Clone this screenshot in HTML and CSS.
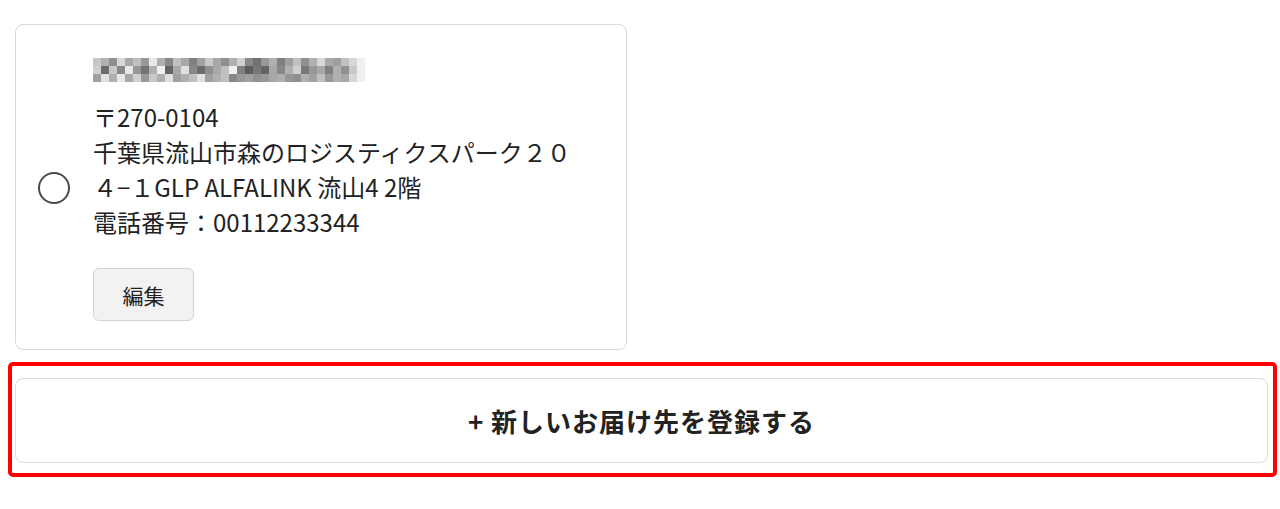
FILE: index.html
```html
<!DOCTYPE html>
<html lang="ja">
<head>
<meta charset="utf-8">
<title>お届け先</title>
<link rel="stylesheet" href="styles.css">
</head>
<body>
<main class="page">
  <section class="address-card">
    <label class="radio" aria-label="このお届け先を選択"><span class="radio-ring"></span></label>
    <div class="address-body">
      <svg class="mosaic" width="272" height="24" viewBox="0 0 272 24" aria-hidden="true">
        <g>
          <rect x="0" y="0" width="8" height="8" fill="#c8c8c8"/><rect x="8" y="0" width="8" height="8" fill="#b0b0b0"/><rect x="16" y="0" width="8" height="8" fill="#909090"/><rect x="24" y="0" width="8" height="8" fill="#d8d8d8"/><rect x="32" y="0" width="8" height="8" fill="#a8a8a8"/><rect x="40" y="0" width="8" height="8" fill="#c0c0c0"/><rect x="48" y="0" width="8" height="8" fill="#989898"/><rect x="56" y="0" width="8" height="8" fill="#e8e8e8"/><rect x="64" y="0" width="8" height="8" fill="#b0b0b0"/><rect x="72" y="0" width="8" height="8" fill="#888888"/><rect x="80" y="0" width="8" height="8" fill="#c0c0c0"/><rect x="88" y="0" width="8" height="8" fill="#a8a8a8"/><rect x="96" y="0" width="8" height="8" fill="#808080"/><rect x="104" y="0" width="8" height="8" fill="#a0a0a0"/><rect x="112" y="0" width="8" height="8" fill="#c8c8c8"/><rect x="120" y="0" width="8" height="8" fill="#a8a8a8"/><rect x="128" y="0" width="8" height="8" fill="#909090"/><rect x="136" y="0" width="8" height="8" fill="#b0b0b0"/><rect x="144" y="0" width="8" height="8" fill="#d0d0d0"/><rect x="152" y="0" width="8" height="8" fill="#888888"/><rect x="160" y="0" width="8" height="8" fill="#707070"/><rect x="168" y="0" width="8" height="8" fill="#989898"/><rect x="176" y="0" width="8" height="8" fill="#b0b0b0"/><rect x="184" y="0" width="8" height="8" fill="#808080"/><rect x="192" y="0" width="8" height="8" fill="#a0a0a0"/><rect x="200" y="0" width="8" height="8" fill="#c0c0c0"/><rect x="208" y="0" width="8" height="8" fill="#909090"/><rect x="216" y="0" width="8" height="8" fill="#b0b0b0"/><rect x="224" y="0" width="8" height="8" fill="#d8d8d8"/><rect x="232" y="0" width="8" height="8" fill="#a8a8a8"/><rect x="240" y="0" width="8" height="8" fill="#a0a0a0"/><rect x="248" y="0" width="8" height="8" fill="#c0c0c0"/><rect x="256" y="0" width="8" height="8" fill="#d8d8d8"/><rect x="264" y="0" width="8" height="8" fill="#f0f0f0"/>
        </g>
        <g>
          <rect x="0" y="8" width="8" height="8" fill="#d0d0d0"/><rect x="8" y="8" width="8" height="8" fill="#6c6c6c"/><rect x="16" y="8" width="8" height="8" fill="#c8c8c8"/><rect x="24" y="8" width="8" height="8" fill="#888888"/><rect x="32" y="8" width="8" height="8" fill="#e8e8e8"/><rect x="40" y="8" width="8" height="8" fill="#989898"/><rect x="48" y="8" width="8" height="8" fill="#747474"/><rect x="56" y="8" width="8" height="8" fill="#b0b0b0"/><rect x="64" y="8" width="8" height="8" fill="#f0f0f0"/><rect x="72" y="8" width="8" height="8" fill="#646464"/><rect x="80" y="8" width="8" height="8" fill="#a8a8a8"/><rect x="88" y="8" width="8" height="8" fill="#e0e0e0"/><rect x="96" y="8" width="8" height="8" fill="#888888"/><rect x="104" y="8" width="8" height="8" fill="#6c6c6c"/><rect x="112" y="8" width="8" height="8" fill="#909090"/><rect x="120" y="8" width="8" height="8" fill="#a8a8a8"/><rect x="128" y="8" width="8" height="8" fill="#c0c0c0"/><rect x="136" y="8" width="8" height="8" fill="#f0f0f0"/><rect x="144" y="8" width="8" height="8" fill="#808080"/><rect x="152" y="8" width="8" height="8" fill="#5c5c5c"/><rect x="160" y="8" width="8" height="8" fill="#787878"/><rect x="168" y="8" width="8" height="8" fill="#646464"/><rect x="176" y="8" width="8" height="8" fill="#a8a8a8"/><rect x="184" y="8" width="8" height="8" fill="#888888"/><rect x="192" y="8" width="8" height="8" fill="#b0b0b0"/><rect x="200" y="8" width="8" height="8" fill="#d0d0d0"/><rect x="208" y="8" width="8" height="8" fill="#787878"/><rect x="216" y="8" width="8" height="8" fill="#989898"/><rect x="224" y="8" width="8" height="8" fill="#a8a8a8"/><rect x="232" y="8" width="8" height="8" fill="#808080"/><rect x="240" y="8" width="8" height="8" fill="#b0b0b0"/><rect x="248" y="8" width="8" height="8" fill="#909090"/><rect x="256" y="8" width="8" height="8" fill="#c8c8c8"/><rect x="264" y="8" width="8" height="8" fill="#f0f0f0"/>
        </g>
        <g>
          <rect x="0" y="16" width="8" height="8" fill="#a0a0a0"/><rect x="8" y="16" width="8" height="8" fill="#e0e0e0"/><rect x="16" y="16" width="8" height="8" fill="#b0b0b0"/><rect x="24" y="16" width="8" height="8" fill="#e8e8e8"/><rect x="32" y="16" width="8" height="8" fill="#a8a8a8"/><rect x="40" y="16" width="8" height="8" fill="#d0d0d0"/><rect x="48" y="16" width="8" height="8" fill="#989898"/><rect x="56" y="16" width="8" height="8" fill="#c8c8c8"/><rect x="64" y="16" width="8" height="8" fill="#b0b0b0"/><rect x="72" y="16" width="8" height="8" fill="#e0e0e0"/><rect x="80" y="16" width="8" height="8" fill="#a0a0a0"/><rect x="88" y="16" width="8" height="8" fill="#b0b0b0"/><rect x="96" y="16" width="8" height="8" fill="#c0c0c0"/><rect x="104" y="16" width="8" height="8" fill="#e0e0e0"/><rect x="112" y="16" width="8" height="8" fill="#a0a0a0"/><rect x="120" y="16" width="8" height="8" fill="#b0b0b0"/><rect x="128" y="16" width="8" height="8" fill="#c0c0c0"/><rect x="136" y="16" width="8" height="8" fill="#888888"/><rect x="144" y="16" width="8" height="8" fill="#989898"/><rect x="152" y="16" width="8" height="8" fill="#a0a0a0"/><rect x="160" y="16" width="8" height="8" fill="#909090"/><rect x="168" y="16" width="8" height="8" fill="#989898"/><rect x="176" y="16" width="8" height="8" fill="#a8a8a8"/><rect x="184" y="16" width="8" height="8" fill="#b0b0b0"/><rect x="192" y="16" width="8" height="8" fill="#989898"/><rect x="200" y="16" width="8" height="8" fill="#909090"/><rect x="208" y="16" width="8" height="8" fill="#b0b0b0"/><rect x="216" y="16" width="8" height="8" fill="#a0a0a0"/><rect x="224" y="16" width="8" height="8" fill="#c0c0c0"/><rect x="232" y="16" width="8" height="8" fill="#989898"/><rect x="240" y="16" width="8" height="8" fill="#b0b0b0"/><rect x="248" y="16" width="8" height="8" fill="#a8a8a8"/><rect x="256" y="16" width="8" height="8" fill="#d8d8d8"/><rect x="264" y="16" width="8" height="8" fill="#f0f0f0"/>
        </g>
      </svg>
      <p class="address-lines">〒270-0104<br>千葉県流山市森のロジスティクスパーク２０４−１GLP ALFALINK 流山4 2階<br>電話番号：00112233344</p>
      <button class="edit-button" type="button">編集</button>
    </div>
  </section>
  <div class="highlight">
    <button class="add-button" type="button">+ 新しいお届け先を登録する</button>
  </div>
</main>
</body>
</html>
```
FILE: styles.css
```css
* {
  box-sizing: border-box;
}

html, body {
  margin: 0;
  padding: 0;
  background: #ffffff;
}

body {
  font-family: "Noto Sans CJK JP", "Noto Sans", sans-serif;
  color: #222222;
}

.page {
  padding: 24px 0 0 0;
  display: flex;
  flex-direction: column;
}

.address-card {
  margin-left: 15px;
  width: 612px;
  height: 326px;
  border: 1px solid #d9d9d9;
  border-radius: 8px;
  display: flex;
  align-items: flex-start;
  padding: 33px 32px 28px 22px;
  gap: 23px;
}

.radio {
  flex: 0 0 auto;
  display: flex;
  align-self: center;
  margin-top: -4px;
}

.radio-ring {
  width: 32px;
  height: 32px;
  border: 2px solid #4a4a4a;
  border-radius: 50%;
}

.address-body {
  display: flex;
  flex-direction: column;
  align-items: flex-start;
  flex: 1 1 auto;
  min-width: 0;
}

.mosaic {
  display: block;
  margin-bottom: 17px;
}

.address-lines {
  margin: 0;
  font-size: 24px;
  line-height: 35px;
  color: #222222;
}

.edit-button {
  margin-top: 29px;
  width: 101px;
  height: 53px;
  background: #f2f2f2;
  border: 1px solid #d4d4d4;
  border-radius: 6px;
  font-family: inherit;
  font-size: 21px;
  color: #222222;
  padding: 0;
}

.highlight {
  margin: 12px 3px 0 8px;
  border: 4px solid #ff0000;
  border-radius: 5px;
  padding: 12px 5px 10px 3px;
}

.add-button {
  display: block;
  width: 100%;
  height: 85px;
  background: #ffffff;
  border: 1px solid #dcdcdc;
  border-radius: 8px;
  font-family: inherit;
  font-size: 26px;
  font-weight: 700;
  color: #222222;
  letter-spacing: 1px;
  padding: 0;
}
```
